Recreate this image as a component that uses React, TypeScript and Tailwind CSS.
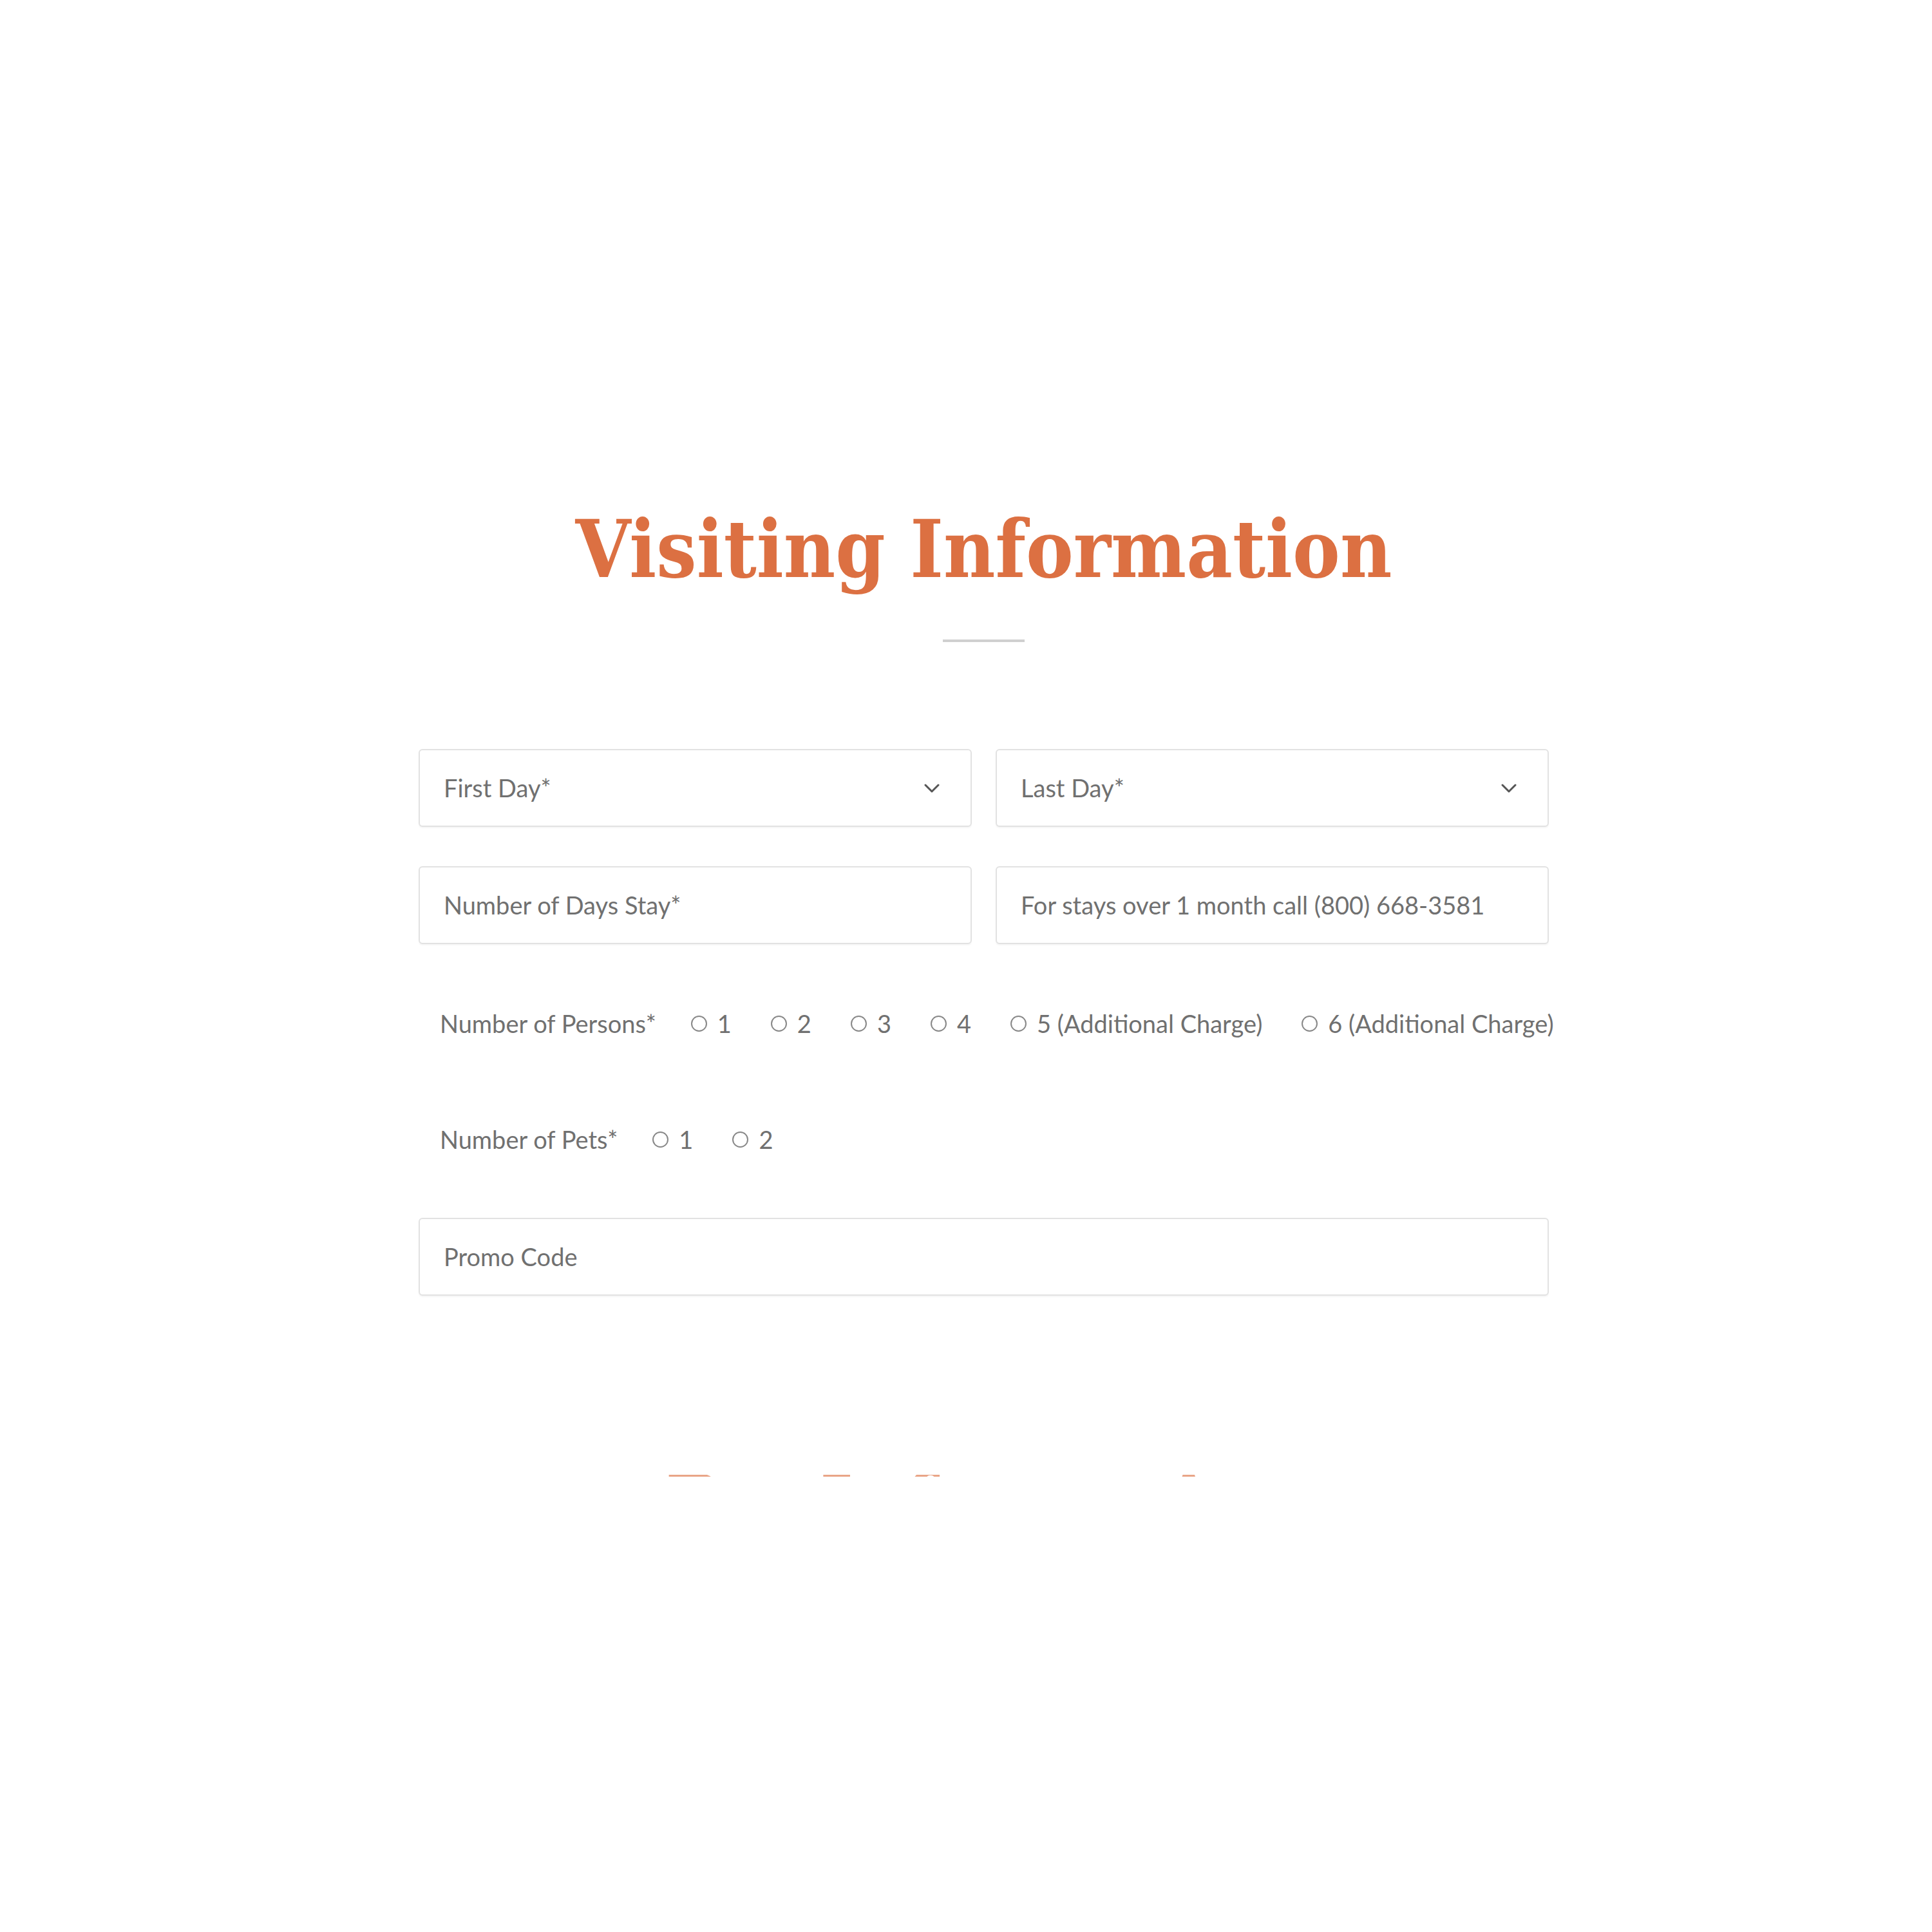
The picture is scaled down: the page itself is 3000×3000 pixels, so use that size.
const persons = ["1", "2", "3", "4", "5 (Additional Charge)", "6 (Additional Charge)"];
const pets = ["1", "2"];

const Chevron = () => (
  <svg width="24" height="14" viewBox="0 0 24 14" fill="none">
    <path d="M2 2 L12 12 L22 2" stroke="#555" strokeWidth="3" strokeLinecap="round" strokeLinejoin="round" />
  </svg>
);

const Field: React.FC<{ label: string; select?: boolean }> = ({ label, select }) => (
  <div className="flex h-[121px] flex-1 items-center justify-between rounded-[6px] border-2 border-[#e2e2e2] bg-white pl-[37px] pr-[48px] shadow-[0_2px_2px_rgba(0,0,0,0.04)]">
    <span className="text-[38px] text-[#707070]">{label}</span>
    {select && <Chevron />}
  </div>
);

const RadioGroup: React.FC<{ label: string; options: string[] }> = ({ label, options }) => (
  <div className="flex items-center whitespace-nowrap pl-[33px] text-[38px] leading-[50px] text-[#707070]">
    <span className="mr-[54px] shrink-0">{label}</span>
    {options.map((o) => (
      <label key={o} className="mr-[61px] flex shrink-0 items-center">
        <span className="mr-[16px] h-[25px] w-[25px] rounded-full border-2 border-[#888]" />
        <span>{o}</span>
      </label>
    ))}
  </div>
);

const App: React.FC = () => {
  return (
    <div className="h-[3000px] w-[3000px] overflow-hidden bg-white font-['Lato','Liberation_Sans',sans-serif]">
      <div className="ml-[650px] w-[1755px] pt-[792px]">
        <h1 className="text-center font-['DejaVu_Serif_Condensed','DejaVu_Serif',serif] text-[123px] leading-none font-bold text-[#dc7042]">
          Visiting Information
        </h1>
        <div className="mx-auto mt-[78px] h-[4px] w-[127px] bg-[#cfcfcf]" />

        <div className="mt-[166px] flex gap-[37px]">
          <Field label="First Day*" select />
          <Field label="Last Day*" select />
        </div>
        <div className="mt-[61px] flex gap-[37px]">
          <Field label="Number of Days Stay*" />
          <Field label="For stays over 1 month call (800) 668-3581" />
        </div>

        <div className="mt-[98px]">
          <RadioGroup label="Number of Persons*" options={persons} />
        </div>
        <div className="mt-[130px]">
          <RadioGroup label="Number of Pets*" options={pets} />
        </div>

        <div className="mt-[97px] flex">
          <Field label="Promo Code" />
        </div>

        <div className="mt-[278px] h-[3px] overflow-hidden">
          <h2 className="-mt-[16px] text-center font-['DejaVu_Serif_Condensed','DejaVu_Serif',serif] text-[123px] leading-none font-bold text-[#e9a587]">
            Pet Information
          </h2>
        </div>
      </div>
    </div>
  );
};

export default App;
